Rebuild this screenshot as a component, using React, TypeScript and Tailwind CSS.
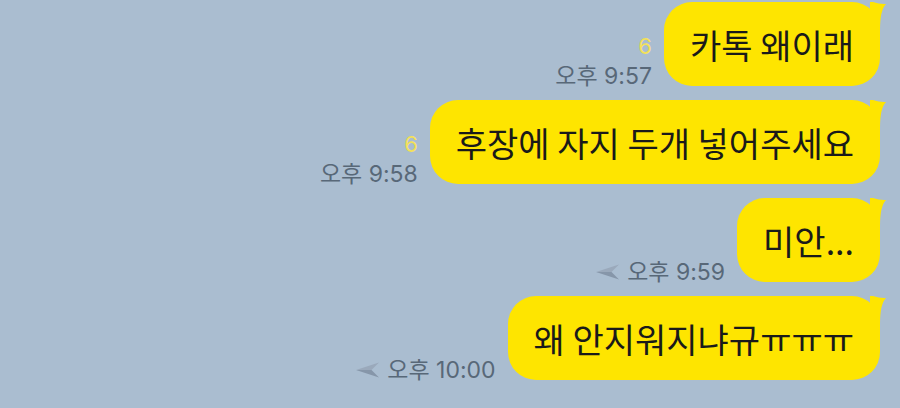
import React from "react";

type Message = {
  text: string;
  time: string;
  unread?: string;
  pending?: boolean;
};

const messages: Message[] = [
  { text: "카톡 왜이래", time: "오후 9:57", unread: "6" },
  { text: "후장에 자지 두개 넣어주세요", time: "오후 9:58", unread: "6" },
  { text: "미안...", time: "오후 9:59", pending: true },
  { text: "왜 안지워지냐규ㅠㅠㅠ", time: "오후 10:00", pending: true },
];

// little "not sent yet" arrowhead in front of the time
function PendingArrow() {
  return (
    <svg width="24" height="16" viewBox="0 0 24 16" aria-hidden="true">
      <path d="M0 8 L23 0.5 L15.5 8 Z" fill="#9aa9bb" />
      <path d="M0 8 L15.5 8 L23 15.5 Z" fill="#8696a9" />
    </svg>
  );
}

// the ear at the bubble's top right corner
function Tail() {
  return (
    <svg
      className="absolute right-[-6px] top-0"
      width="16"
      height="28"
      viewBox="0 0 16 28"
      aria-hidden="true"
    >
      <path d="M0 0 H3 Q10 2.5 16 2 Q10 8 10 28 H0 Z" fill="#fee500" />
    </svg>
  );
}

function Row({ m }: { m: Message }) {
  return (
    <div className="flex items-end gap-[12px]">
      <div className="flex flex-col items-end font-['Inter','Noto_Sans_CJK_KR',sans-serif]">
        {m.unread && (
          <span className="mb-[10px] text-[22px] leading-[20px] text-[#f3e15a]">
            {m.unread}
          </span>
        )}
        <div className="flex items-center gap-[7px]">
          {m.pending && <PendingArrow />}
          <span className="text-[23px] leading-[20px] text-[#586878]">
            {m.time}
          </span>
        </div>
      </div>
      <div className="relative flex h-[84px] items-center rounded-[28px] bg-[#fee500] px-[26px] font-['Noto_Sans_CJK_KR',sans-serif] text-[34px] text-[#1a1a1a]">
        {m.text}
        <Tail />
      </div>
    </div>
  );
}

export default function App() {
  return (
    <div className="flex h-[408px] w-[900px] flex-col items-end gap-[14px] overflow-hidden bg-[#aabdd0] pr-[20px] pt-[2px]">
      {messages.map((m, i) => (
        <Row key={i} m={m} />
      ))}
    </div>
  );
}
